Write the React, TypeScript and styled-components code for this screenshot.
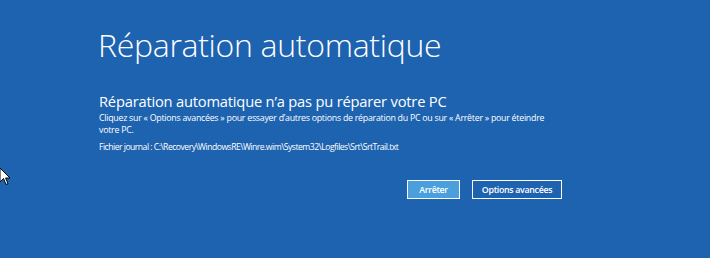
import styled, { createGlobalStyle } from "styled-components";

const GlobalStyle = createGlobalStyle`
  html, body {
    margin: 0;
    padding: 0;
    background: #1e63b0;
  }
`;

const Screen = styled.div`
  position: relative;
  width: 710px;
  height: 258px;
  background-color: #1e63b0;
  color: #ffffff;
  font-family: "Open Sans", "Noto Sans", sans-serif;
  overflow: hidden;
`;

const Content = styled.div`
  display: flex;
  flex-direction: column;
  width: 464px;
  padding: 22px 0 0 98px;
`;

const Title = styled.h1`
  margin: 0;
  font-weight: 300;
  font-size: 32px;
  line-height: 46px;
  letter-spacing: -0.3px;
`;

const Subtitle = styled.h2`
  margin: 24px 0 0 1px;
  font-weight: 400;
  font-size: 14.7px;
  line-height: 18px;
  letter-spacing: -0.2px;
`;

const Message = styled.p`
  max-width: 452px;
  margin: 2px 0 0 1px;
  font-size: 8.8px;
  line-height: 12px;
  letter-spacing: -0.25px;
`;

const LogLine = styled(Message)`
  margin-top: 5px;
  font-size: 8.6px;
  letter-spacing: -0.5px;
`;

const Actions = styled.div`
  display: flex;
  justify-content: flex-end;
  gap: 12px;
  margin-top: 27px;
`;

const Button = styled.button<{ $primary?: boolean }>`
  height: 19px;
  width: ${(p) => (p.$primary ? "53px" : "90px")};
  padding: 0;
  border: 1px solid #ffffff;
  background-color: ${(p) => (p.$primary ? "#4a9fdc" : "transparent")};
  color: #ffffff;
  font-family: "Open Sans", "Noto Sans", sans-serif;
  font-size: 8.8px;
  font-weight: 600;
  letter-spacing: -0.3px;
  cursor: pointer;
`;

const Pointer = styled.svg`
  position: absolute;
  left: -1px;
  top: 167px;
`;

export default function App() {
  return (
    <Screen>
      <GlobalStyle />
      <Content>
        <Title>Réparation automatique</Title>
        <Subtitle>Réparation automatique n’a pas pu réparer votre PC</Subtitle>
        <Message>
          Cliquez sur « Options avancées » pour essayer d’autres options de
          réparation du PC ou sur « Arrêter » pour éteindre votre PC.
        </Message>
        <LogLine>
          Fichier journal : C:\Recovery\WindowsRE\Winre.wim\System32\Logfiles\Srt\SrtTrail.txt
        </LogLine>
        <Actions>
          <Button $primary>Arrêter</Button>
          <Button>Options avancées</Button>
        </Actions>
      </Content>
      <Pointer width="12" height="20" viewBox="0 0 12 20">
        <path
          d="M1 1 L1 15 L4.5 11.5 L7 17.5 L9 16.6 L6.6 11 L11 11 Z"
          fill="#ffffff"
          stroke="#000000"
          strokeWidth="1"
          strokeLinejoin="miter"
        />
      </Pointer>
    </Screen>
  );
}
